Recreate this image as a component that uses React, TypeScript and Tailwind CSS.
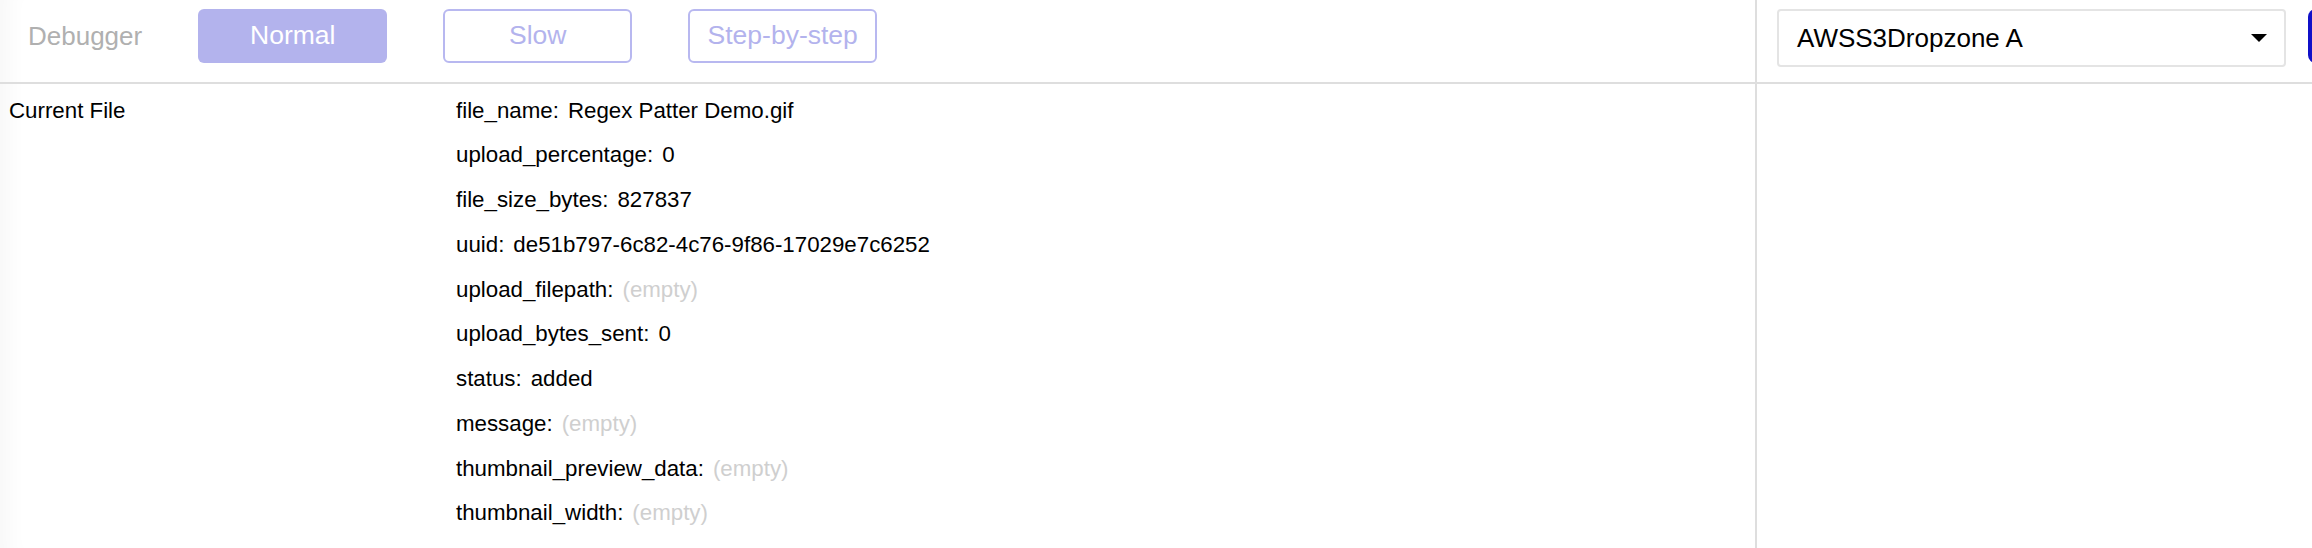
import React from "react";

type Field = {
  key: string;
  value: string | null;
};

const fields: Field[] = [
  { key: "file_name", value: "Regex Patter Demo.gif" },
  { key: "upload_percentage", value: "0" },
  { key: "file_size_bytes", value: "827837" },
  { key: "uuid", value: "de51b797-6c82-4c76-9f86-17029e7c6252" },
  { key: "upload_filepath", value: null },
  { key: "upload_bytes_sent", value: "0" },
  { key: "status", value: "added" },
  { key: "message", value: null },
  { key: "thumbnail_preview_data", value: null },
  { key: "thumbnail_width", value: null },
  { key: "thumbnail_height", value: null },
];

const speeds = ["Normal", "Slow", "Step-by-step"];

export default function App() {
  const active = "Normal";

  return (
    <div
      className="flex h-[548px] w-full overflow-hidden bg-white text-black shadow-[inset_26px_0_22px_-18px_rgba(0,0,0,0.035)]"
      style={{ fontFamily: '"Liberation Sans", Arial, sans-serif' }}
    >
      {/* Debugger column */}
      <div className="flex w-[1757px] shrink-0 flex-col border-r-2 border-[#dedede]">
        <header className="flex h-[84px] shrink-0 items-start gap-[56px] border-b-2 border-[#dedede] pl-[28px] pt-[9px]">
          <span className="flex h-[54px] items-center text-[26px] text-[#b0b0b0]">Debugger</span>
          {speeds.map((s) =>
            s === active ? (
              <button
                key={s}
                className="flex h-[54px] w-[189px] items-center justify-center rounded-[6px] bg-[#b3b3ed] text-[26.5px] text-white"
              >
                {s}
              </button>
            ) : (
              <button
                key={s}
                className="flex h-[54px] w-[189px] items-center justify-center rounded-[6px] border-2 border-[#b8b8f0] bg-white text-[26.5px] text-[#b3b3ed]"
              >
                {s}
              </button>
            )
          )}
        </header>

        <div className="flex flex-1 pt-[4px]">
          <div className="w-[456px] shrink-0 pl-[9px]">
            <div className="flex h-[44.75px] items-center text-[22.3px]">Current File</div>
          </div>
          <ul className="flex flex-col">
            {fields.map((f) => (
              <li key={f.key} className="flex h-[44.75px] items-center text-[22.3px]">
                <span>{f.key}:</span>
                {f.value === null ? (
                  <span className="ml-[9px] text-[#cfcfcf]">(empty)</span>
                ) : (
                  <span className="ml-[9px]">{f.value}</span>
                )}
              </li>
            ))}
          </ul>
        </div>
      </div>

      {/* Dropzone column */}
      <div className="flex min-w-0 flex-1 flex-col">
        <header className="flex h-[84px] shrink-0 items-start gap-[22px] border-b-2 border-[#dedede] pl-[20px] pt-[9px]">
          <div className="flex h-[58px] w-[509px] shrink-0 items-center justify-between rounded-[4px] border-2 border-[#e4e4e4] pl-[18px] pr-[17px]">
            <span className="text-[26px]">AWSS3Dropzone A</span>
            <svg width="16" height="8" viewBox="0 0 16 8">
              <path d="M0 0 H16 L8 8 Z" fill="#000" />
            </svg>
          </div>
          <button className="h-[54px] w-[120px] shrink-0 rounded-[8px] bg-[#1010c8]" />
        </header>
        <div className="flex-1" />
      </div>
    </div>
  );
}
